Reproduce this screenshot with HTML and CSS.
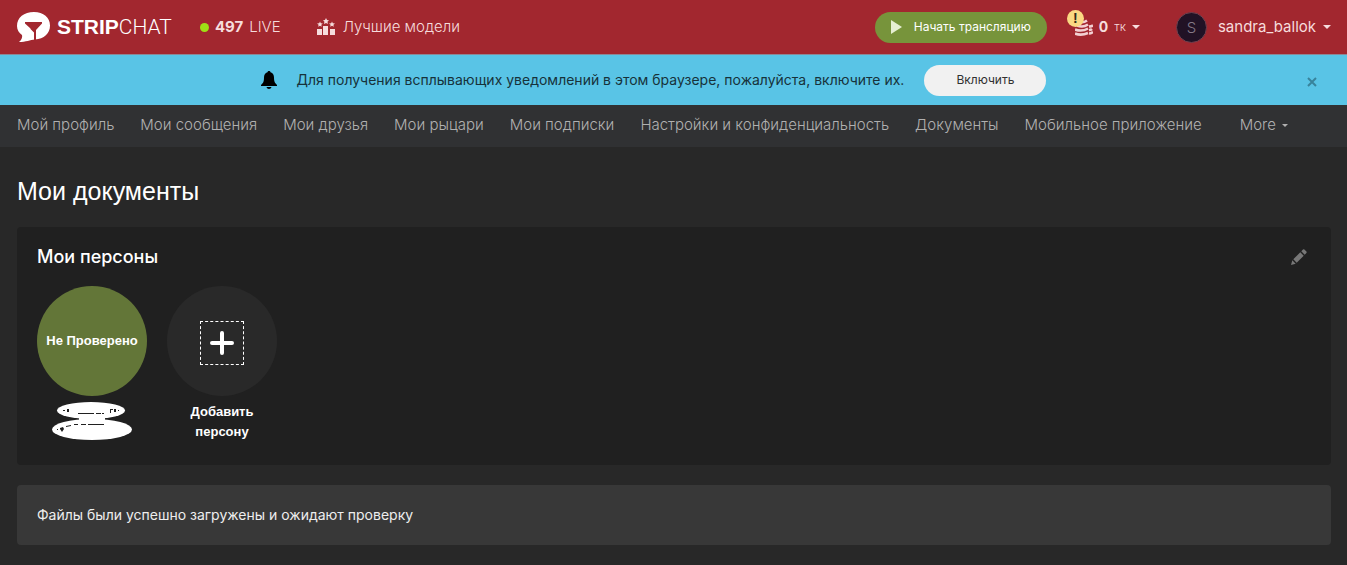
FILE: index.html
```html
<!DOCTYPE html>
<html lang="ru">
<head>
<meta charset="utf-8">
<title>Мои документы</title>
<link rel="stylesheet" href="styles.css">
</head>
<body>
<header class="header">
  <a class="logo" href="#">
    <svg class="logo-mark" viewBox="0 0 33 31" width="33" height="31" aria-hidden="true">
      <path fill="#fff" d="M17 0C26.500 0 33 5.500 33 13.500S27 27 18 27.500C13 28 9 30 2 30 5 27.500 5.500 25 5 23 2 21 0 18 0 14 0 5.500 7 0 17 0Z"/>
      <path fill="#a2272f" d="M8 10H25V11.500L19 18V28H17V20.500L13.500 17V16.500L8 11.500Z"/>
    </svg>
    <span><b>STRIP</b><span class="logo-light">CHAT</span></span>
  </a>
  <a class="live" href="#"><span class="live-dot"></span><b>497</b> LIVE</a>
  <a class="top-models" href="#">
    <svg viewBox="0 0 18 18" width="18" height="18" fill="currentColor" aria-hidden="true">
      <path d="M0 11h5v6H0zM6 8h5v9H6zM13 11h5v6h-5zM9 0l1 2 2 .3-1.500 1.500.4 2.200L9 5 7 6l.4-2.200L6 2.300 8 2zM3 3.500l.8 1.700 2 .2-1.500 1.400.4 2L3 7.800 1.200 8.800l.4-2L0 5.400l2.200-.2zM15 3.500l.8 1.700 2.200.2-1.600 1.400.4 2L15 7.800l-1.800 1 .4-2L12 5.400l2.200-.2z"/>
    </svg>
    Лучшие модели
  </a>
  <button class="broadcast" type="button">
    <svg viewBox="0 0 11 14" width="11" height="14" aria-hidden="true"><path fill="#e6efd2" d="M0 0 11 7 0 14Z"/></svg>
    Начать трансляцию
  </button>
  <button class="tokens" type="button">
    <span class="coins">
      <svg viewBox="0 0 18 17" width="18" height="17" fill="none" stroke="#f3d0d2" stroke-width="2.600" aria-hidden="true">
        <path d="M3 2.500q5 2 9-1M2 6.500q6 2.500 11-1M0 10.500q7 2.500 13-1M0 14.500q6 2.500 13-.5M14 7.500q2 0 4-1M14 11q2 0 3-1M14 14.500q2 0 4-1.500"/>
      </svg>
      <span class="alert">!</span>
    </span>
    <b>0</b> <span class="unit">тк</span>
    <span class="caret"></span>
  </button>
  <button class="user" type="button">
    <span class="avatar">S</span>
    <span>sandra_ballok</span>
    <span class="caret"></span>
  </button>
</header>

<section class="notice">
  <div class="notice-body">
    <svg viewBox="0 0 16 18" width="16" height="18" aria-hidden="true">
      <path fill="#000" d="M8 0c1 0 1.500.6 1.500 1.300C12 2 13 4 13 6.500 13 11 14 12 16 14v1H0v-1c2-2 3-3 3-7.500C3 4 4 2 6.500 1.300 6.500.6 7 0 8 0ZM5.500 16h5c-.5 2.500-4.500 2.500-5 0Z"/>
    </svg>
    <span class="notice-text">Для получения всплывающих уведомлений в этом браузере, пожалуйста, включите их.</span>
    <button class="enable" type="button">Включить</button>
  </div>
  <button class="close" type="button" aria-label="Закрыть">
    <svg viewBox="0 0 10 10" width="10" height="10"><path d="M1 1 9 9M9 1 1 9" stroke="#38839b" stroke-width="2"/></svg>
  </button>
</section>

<nav class="nav">
  <a href="#">Мой профиль</a>
  <a href="#">Мои сообщения</a>
  <a href="#">Мои друзья</a>
  <a href="#">Мои рыцари</a>
  <a href="#">Мои подписки</a>
  <a href="#">Настройки и конфиденциальность</a>
  <a href="#">Документы</a>
  <a href="#">Мобильное приложение</a>
  <button class="more" type="button">More <span class="caret small"></span></button>
</nav>

<main class="main">
  <h1>Мои документы</h1>
  <section class="panel">
    <div class="panel-head">
      <h2>Мои персоны</h2>
      <button class="edit" type="button" aria-label="Редактировать">
        <svg viewBox="0 0 16 16" width="16" height="16" fill="#777"><path d="M0 16 1.300 11.300 4.700 14.700ZM2.300 10.300 9.300 3.300 12.700 6.700 5.700 13.700ZM10.300 2.300 12 .6Q12.700 0 13.400.6L15.400 2.600Q16 3.300 15.400 4L13.700 5.700Z"/></svg>
      </button>
    </div>
    <div class="persons">
      <div class="person">
        <span class="circle verified">Не Проверено</span>
        <svg viewBox="0 0 80 38" width="80" height="38" aria-hidden="true">
          <ellipse cx="39" cy="8.500" rx="34" ry="8.500" fill="#fff"/>
          <ellipse cx="40" cy="27.500" rx="40" ry="10.500" fill="#fff"/>
          <path fill="#fff" d="M27 14h26v6H27z"/>
          <path d="M26 11.500h16M44 11.500h5M50 11.500h2M14 24.500l5-1M22 22.500h4M29 22.500h5M36 22.500h16" stroke="#202020"/>
          <path fill="#202020" d="M11 8h2v1h-2zM15 7h2v3h-2zM58 7h3v1h-2v3h-1zM62 7h2v3h-2zM66 8h1v1h-1zM8 26l3-1 1 2-2 3-2-3zM5 27h1v1H5z"/>
        </svg>
      </div>
      <button class="person" type="button">
        <span class="circle add">
          <span class="plus">
            <svg viewBox="0 0 24 24" width="24" height="24"><path d="M12 2V22M2 12H22" stroke="#fff" stroke-width="4" stroke-linecap="round"/></svg>
          </span>
        </span>
        <span class="add-label">Добавить персону</span>
      </button>
    </div>
  </section>
  <p class="status">Файлы были успешно загружены и ожидают проверку</p>
</main>
</body>
</html>
```
FILE: styles.css
```css
* { box-sizing: border-box; }
body {
  margin: 0;
  min-height: 100vh;
  background: #282828;
  color: #fff;
  font: 400 14px/20px Inter, "Liberation Sans", sans-serif;
}
a { color: inherit; text-decoration: none; }
button {
  border: 0;
  padding: 0;
  background: none;
  color: inherit;
  font: inherit;
  cursor: pointer;
}
svg { display: block; flex: none; }
h1, h2, p { margin: 0; }

.header {
  display: flex;
  align-items: center;
  height: 55px;
  padding: 0 16px 0 17px;
  background: #a2272f;
  border-bottom: 1px solid #8c8795;
  color: #f6dcdd;
  font-size: 15px;
  font-weight: 300;
  white-space: nowrap;
}
.header b { font-weight: 700; }
.logo {
  display: flex;
  align-items: center;
  gap: 7px;
  color: #fff;
  font: 21px/30px "Liberation Sans", Arial, sans-serif;
}
.logo-light { font-family: Roboto, sans-serif; font-weight: 300; }
.live { display: flex; align-items: center; gap: 6px; margin-left: 28px; }
.live-dot { width: 9px; height: 9px; border-radius: 50%; background: #9fdf15; }
.top-models { display: flex; align-items: center; gap: 8px; margin-left: 36px; }
.broadcast {
  display: flex;
  align-items: center;
  justify-content: center;
  gap: 12px;
  width: 172px;
  height: 31px;
  margin-left: auto;
  border-radius: 16px;
  background: #77943b;
  color: #fff;
  font-size: 12px;
  font-weight: 400;
}
.tokens { display: flex; align-items: center; gap: 6px; margin-left: 28px; font-size: 14px; }
.coins { position: relative; }
.alert {
  position: absolute;
  top: -9px;
  left: -8px;
  width: 17px;
  height: 17px;
  border-radius: 50%;
  background: #fbd983;
  color: #302a1a;
  font: 700 14px/17px "Liberation Sans", sans-serif;
  text-align: center;
}
.unit { font-size: 12px; }
.caret {
  border: 4px solid transparent;
  border-top-color: currentColor;
  border-bottom: 0;
}
.small { border-width: 3px 3px 0; }
.user { display: flex; align-items: center; gap: 7px; margin-left: 36px; font-weight: 400; }
.avatar {
  width: 31px;
  height: 31px;
  margin-right: 4px;
  border: 1px solid #70404e;
  border-radius: 50%;
  background: #211225;
  color: #867a88;
  font-size: 15px;
  font-weight: 300;
  line-height: 29px;
}

.notice {
  display: flex;
  align-items: center;
  height: 50px;
  padding: 0 30px 0 16px;
  background: #59c4e6;
  color: #17323a;
}
.notice-body {
  display: flex;
  flex: 1;
  align-items: center;
  justify-content: center;
  padding-right: 16px;
}
.notice-text { margin: 0 20px; }
.enable {
  width: 122px;
  height: 31px;
  border-radius: 16px;
  background: #f1f1f1;
  color: #303030;
  font-size: 12px;
}
.close { padding: 4px 0 0; }

.nav {
  display: flex;
  gap: 26px;
  height: 42px;
  padding: 10px 16px 10px 17px;
  background: #303133;
  color: #b0b0b0;
  font-size: 15px;
  font-weight: 300;
  white-space: nowrap;
}
.more { display: flex; align-items: center; gap: 6px; height: 20px; margin-left: 12px; }

.main { padding: 28px 16px 20px 17px; }
h1 { font: 400 25px/32px "Liberation Sans", sans-serif; }
.panel {
  margin-top: 20px;
  padding: 20px 20px 23px;
  border-radius: 4px;
  background: #202020;
}
.panel-head { display: flex; align-items: center; justify-content: space-between; }
h2 { font-size: 18px; font-weight: 500; line-height: 20px; }
.edit { margin-right: 4px; }
.persons { display: flex; gap: 20px; margin-top: 19px; }
.person { display: flex; flex-direction: column; align-items: center; gap: 6px; width: 110px; }
.circle {
  display: flex;
  align-items: center;
  justify-content: center;
  width: 110px;
  height: 110px;
  border-radius: 50%;
  font: 700 13px/20px "Liberation Sans", sans-serif;
}
.verified { background: #637638; }
.add { background: #292929; }
.plus {
  display: flex;
  align-items: center;
  justify-content: center;
  width: 44px;
  height: 44px;
  margin-top: 3px;
  border: 1px dashed #fff;
}
.add-label { width: 80px; font: 700 13px/20px "Liberation Sans", sans-serif; }
.status {
  margin-top: 20px;
  padding: 20px;
  border-radius: 4px;
  background: #383838;
  color: #eee;
}
```
